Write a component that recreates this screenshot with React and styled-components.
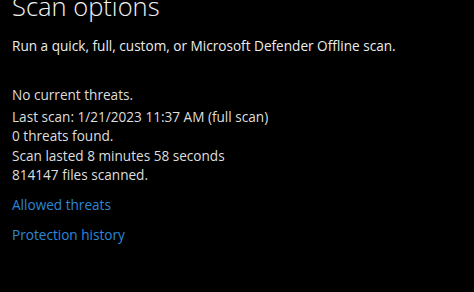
import React from 'react';
import styled, { createGlobalStyle } from 'styled-components';

const GlobalStyle = createGlobalStyle`
  html, body {
    margin: 0;
    padding: 0;
    background: #000;
  }
  body {
    font-family: "Open Sans", "Noto Sans", "Liberation Sans", sans-serif;
    overflow: hidden;
  }
`;

const Page = styled.div`
  width: 474px;
  height: 292px;
  background: #000;
  color: #e6e6e6;
  padding: 0 12px;
  box-sizing: border-box;
  display: flex;
  flex-direction: column;
`;

const Title = styled.h1`
  margin: -12px 0 0;
  font-size: 25.5px;
  font-weight: 300;
  line-height: 36px;
  color: #f2f2f2;
`;

const Subtitle = styled.p`
  margin: 12px 0 0;
  font-size: 13.6px;
  line-height: 20px;
  color: #ececec;
`;

const StatusBlock = styled.div`
  display: flex;
  flex-direction: column;
  margin-top: 29px;
`;

const Line = styled.div`
  font-size: 13.6px;
  line-height: 19.5px;
  color: #dedede;
  margin-bottom: ${(p) => (p.$gap ? '2px' : '0')};
`;

const Links = styled.div`
  display: flex;
  flex-direction: column;
  gap: 10px;
  margin-top: 10px;
`;

const Link = styled.a`
  font-size: 13.6px;
  line-height: 20px;
  color: #2b88d8;
  text-decoration: none;
  cursor: pointer;
`;

export default function App() {
  return (
    <>
      <GlobalStyle />
      <Page>
        <Title>Scan options</Title>
        <Subtitle>Run a quick, full, custom, or Microsoft Defender Offline scan.</Subtitle>
        <StatusBlock>
          <Line $gap>No current threats.</Line>
          <Line>Last scan: 1/21/2023 11:37 AM (full scan)</Line>
          <Line>0 threats found.</Line>
          <Line>Scan lasted 8 minutes 58 seconds</Line>
          <Line>814147 files scanned.</Line>
        </StatusBlock>
        <Links>
          <Link>Allowed threats</Link>
          <Link>Protection history</Link>
        </Links>
      </Page>
    </>
  );
}
